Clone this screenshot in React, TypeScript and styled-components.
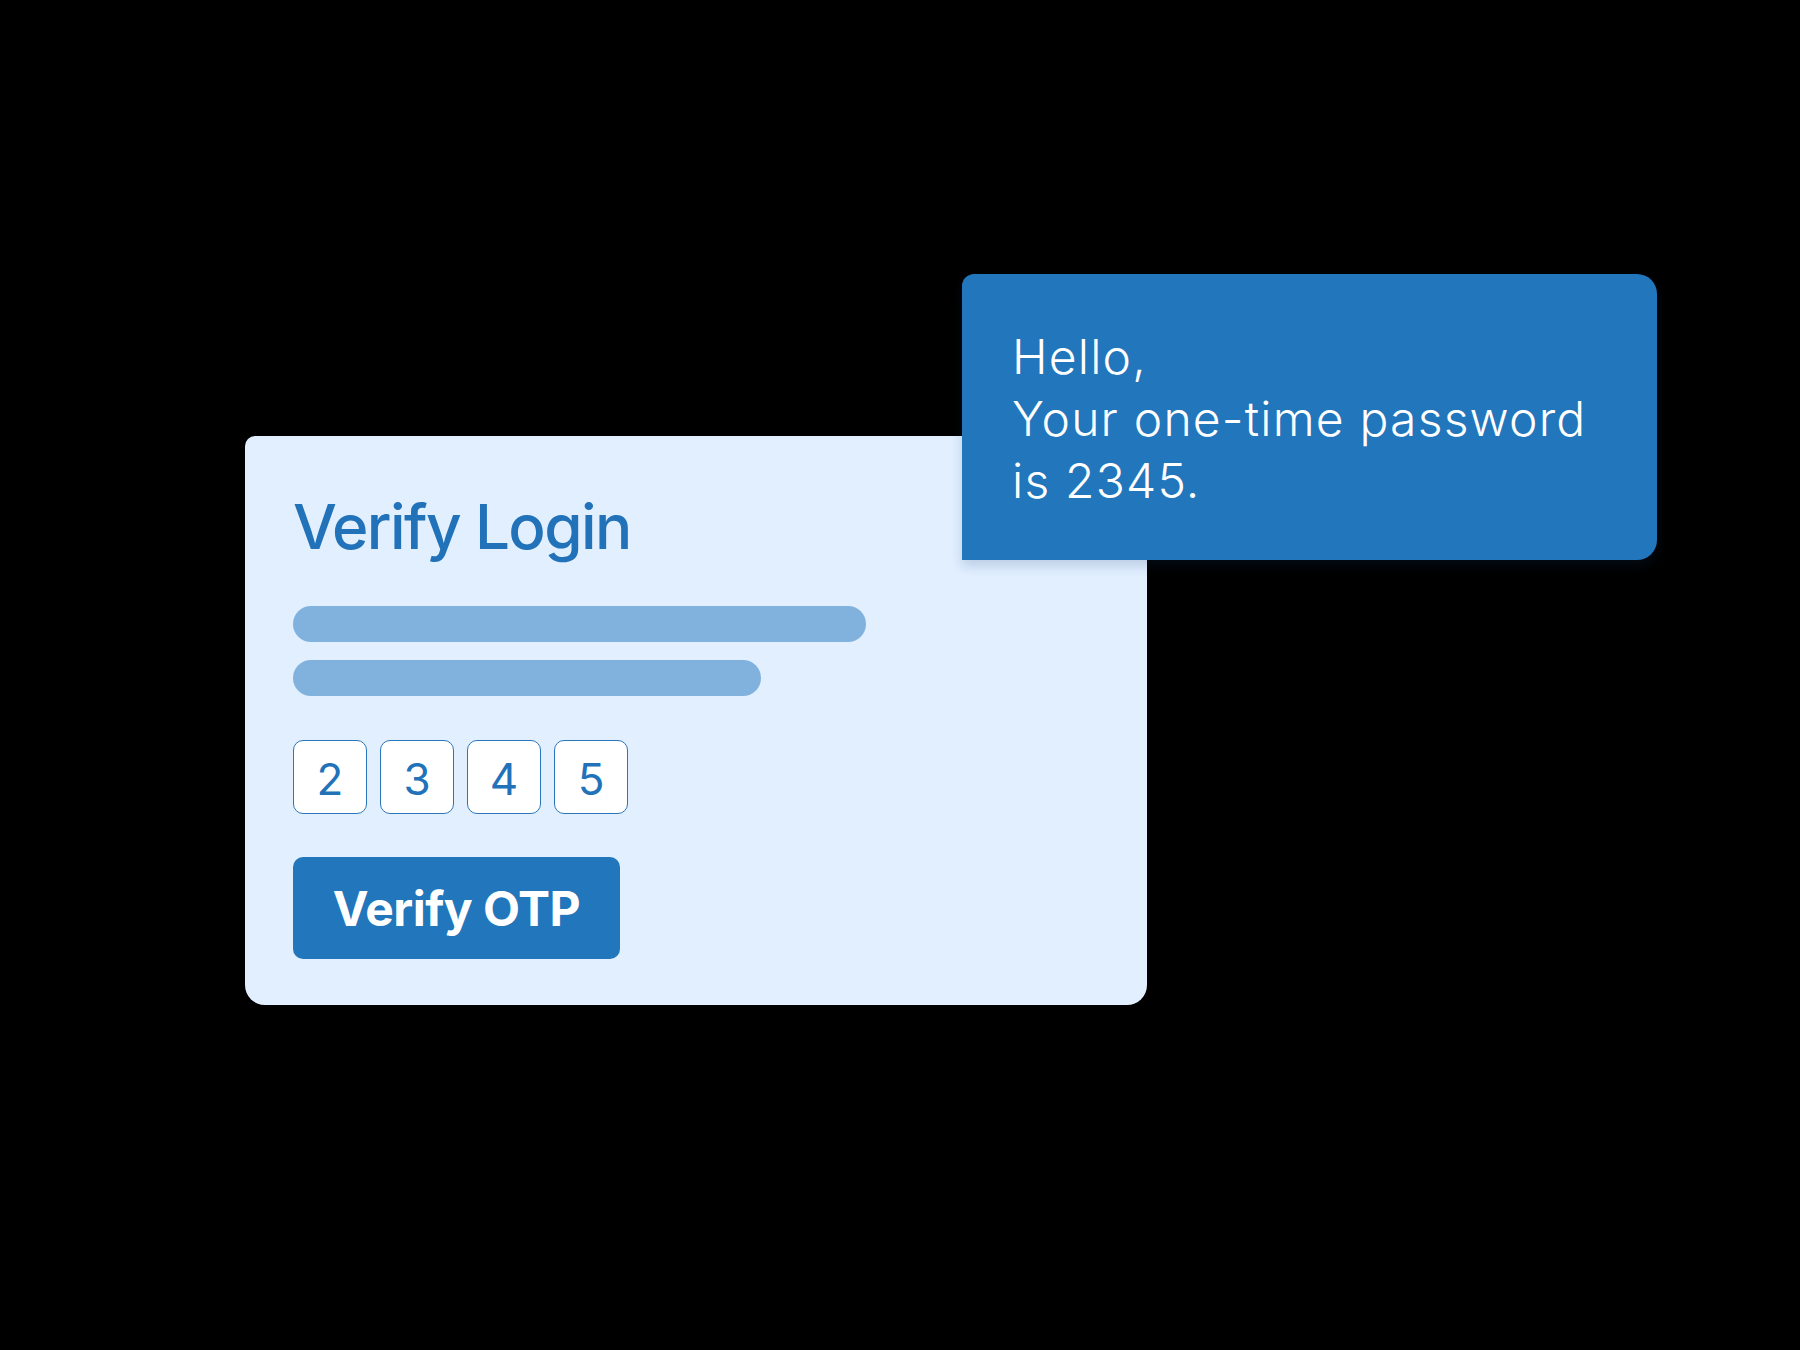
import React from "react";
import styled, { createGlobalStyle } from "styled-components";

const GlobalStyle = createGlobalStyle`
  html, body {
    margin: 0;
    padding: 0;
    background: #000;
  }
  body {
    font-family: Inter, "Noto Sans", "Liberation Sans", sans-serif;
  }
`;

const digits = ["2", "3", "4", "5"];

function App() {
  return (
    <>
      <GlobalStyle />
      <Stage>
        <Card>
          <Title>Verify Login</Title>
          <Bars>
            <Bar $width={573} />
            <Bar $width={468} />
          </Bars>
          <CodeRow>
            {digits.map((d) => (
              <CodeBox key={d}>{d}</CodeBox>
            ))}
          </CodeRow>
          <VerifyButton>Verify OTP</VerifyButton>

          <Message>
            <MessageLine>Hello,</MessageLine>
            <MessageLine>Your one-time password</MessageLine>
            <MessageLine>is 2345.</MessageLine>
          </Message>
        </Card>
      </Stage>
    </>
  );
}

const Stage = styled.div`
  width: 1800px;
  height: 1350px;
  box-sizing: border-box;
  padding: 436px 0 0 245px;
  background: #000;
  overflow: hidden;
`;

const Card = styled.div`
  position: relative;
  width: 902px;
  height: 569px;
  box-sizing: border-box;
  padding: 59px 48px 0 48px;
  background: #e1efff;
  border-radius: 10px 10px 20px 20px;
  display: flex;
  flex-direction: column;
  align-items: flex-start;
`;

const Title = styled.h1`
  margin: 0;
  font-size: 62px;
  line-height: 64px;
  font-weight: 500;
  letter-spacing: -1.6px;
  color: #2272b9;
`;

const Bars = styled.div`
  display: flex;
  flex-direction: column;
  gap: 18px;
  margin-top: 47px;
`;

const Bar = styled.div<{ $width: number }>`
  width: ${(p) => p.$width}px;
  height: 36px;
  border-radius: 18px;
  background: #80b2dd;
`;

const CodeRow = styled.div`
  display: flex;
  gap: 13px;
  margin-top: 44px;
`;

const CodeBox = styled.div`
  width: 74px;
  height: 74px;
  box-sizing: border-box;
  border: 1.6px solid #2a76bc;
  border-radius: 10px;
  background: #fff;
  display: flex;
  align-items: center;
  justify-content: center;
  padding-top: 3px;
  font-size: 44px;
  font-weight: 400;
  color: #2272b9;
`;

const VerifyButton = styled.button`
  margin-top: 43px;
  width: 327px;
  height: 102px;
  border: none;
  border-radius: 10px;
  background: #2176bc;
  color: #fff;
  font-family: inherit;
  font-size: 48px;
  font-weight: 700;
  letter-spacing: -0.5px;
  cursor: pointer;
`;

const Message = styled.div`
  position: absolute;
  top: -162px;
  left: 717px;
  width: 695px;
  height: 286px;
  box-sizing: border-box;
  padding: 52px 0 0 50px;
  background: #2176bc;
  border-radius: 12px 20px 20px 0;
  box-shadow: 0 6px 12px rgba(20, 60, 110, 0.18);
`;

const MessageLine = styled.div`
  font-size: 48px;
  line-height: 62px;
  font-weight: 300;
  letter-spacing: 1.2px;
  color: #fff;
  white-space: nowrap;
`;

export default App;
